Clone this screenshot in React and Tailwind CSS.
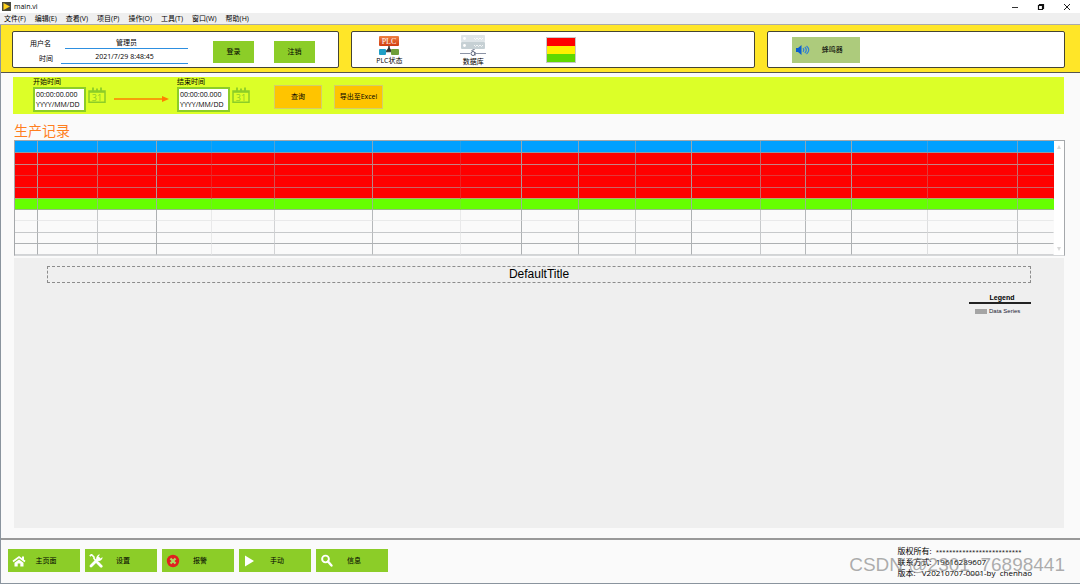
import { useState } from "react";

const menus = [
  "文件(F)",
  "编辑(E)",
  "查看(V)",
  "项目(P)",
  "操作(O)",
  "工具(T)",
  "窗口(W)",
  "帮助(H)",
];

// column widths, the last column takes what is left
const columns = [
  { width: 23, line: "border-r-[#a5a8abe6]" },
  { width: 60, line: "border-r-[#a5a8ab99]" },
  { width: 59, line: "border-r-[#a5a8abe6]" },
  { width: 55, line: "border-r-[#a5a8ab33]" },
  { width: 63, line: "border-r-[#a5a8ab77]" },
  { width: 98, line: "border-r-[#a5a8abcc]" },
  { width: 88, line: "border-r-[#a5a8ab33]" },
  { width: 61, line: "border-r-[#a5a8abe6]" },
  { width: 57, line: "border-r-[#a5a8abcc]" },
  { width: 57, line: "border-r-[#a5a8ab99]" },
  { width: 56, line: "border-r-[#a5a8abe6]" },
  { width: 69, line: "border-r-[#a5a8ab99]" },
  { width: 45, line: "border-r-[#a5a8abcc]" },
  { width: 46, line: "border-r-[#a5a8abe6]" },
  { width: 76, line: "border-r-[#a5a8ab55]" },
  { width: 90, line: "border-r-[#a5a8abaa]" },
  { width: null, line: "border-r-transparent" },
];

const rows = [
  { height: "h-[12px]", bg: "bg-[#ff0000]", line: "border-b-[#b9a5a5cc]" },
  { height: "h-[11px]", bg: "bg-[#ff0000]", line: "border-b-[#a5a8ab55]" },
  { height: "h-[12px]", bg: "bg-[#ff0000]", line: "border-b-[#a5a8ab99]" },
  { height: "h-[11px]", bg: "bg-[#ff0000]", line: "border-b-[#b5a878]" },
  { height: "h-[11px]", bg: "bg-[#66ff00]", line: "border-b-[#a5a8abcc]" },
  { height: "h-[11px]", bg: "bg-[#fafafa]", line: "border-b-[#a5a8ab33]" },
  { height: "h-[12px]", bg: "bg-[#fafafa]", line: "border-b-[#a5a8ab99]" },
  { height: "h-[11px]", bg: "bg-[#fafafa]", line: "border-b-[#a5a8abe6]" },
  { height: "h-[11px]", bg: "bg-[#fafafa]", line: "border-b-[#a5a8ab77]" },
];

function PlcIcon() {
  return (
    <svg className="h-5 w-5" viewBox="0 0 20 20">
      <defs>
        <linearGradient id="plcTop" x1="0" y1="0" x2="0" y2="1">
          <stop offset="0" stopColor="#f08040" />
          <stop offset="1" stopColor="#d03c10" />
        </linearGradient>
      </defs>
      <path d="M10 9v5M4 15.500h12" stroke="#444" strokeWidth="1.600" />
      <path d="M10 11l-3 4h6z" fill="#333" />
      <rect x="0" y="0" width="20" height="10" rx="1" fill="url(#plcTop)" />
      <text
        x="10"
        y="8"
        textAnchor="middle"
        fontFamily="Liberation Serif, serif"
        fontSize="8"
        fill="#fff"
      >
        PLC
      </text>
      <rect x="0" y="13" width="7" height="6" rx="1" fill="#1f9fc6" />
      <rect x="12" y="13" width="8" height="6" rx="1" fill="#6f9e38" />
    </svg>
  );
}

function DatabaseIcon() {
  return (
    <svg className="h-[22px] w-[26px]" viewBox="0 0 26 22" fill="none">
      <rect x="1" y="0" width="24" height="7" rx="1" fill="#dfe5e8" />
      <rect x="1" y="7" width="24" height="7" rx="1" fill="#c6d0d4" />
      <circle cx="4.500" cy="3.500" r="1.400" fill="#fff" />
      <circle cx="4.500" cy="10.500" r="1.400" fill="#fff" />
      <path
        d="M14 3l1.500 1.500L17 3l1.500 1.500L20 3l1.500 1.500L23 3M14 10l1.500 1.500L17 10l1.500 1.500L20 10l1.500 1.500L23 10"
        stroke="#fff"
        strokeWidth="0.800"
      />
      <path d="M0 18.500h10M16 18.500h10" stroke="#8b93a5" />
      <circle cx="13" cy="18.500" r="2" stroke="#59627a" />
      <path d="M11.500 15.500l3-1M15 17v3.500" stroke="#59627a" />
    </svg>
  );
}

function SpeakerIcon() {
  return (
    <svg className="h-[10px] w-[14px]" viewBox="0 0 14 10" fill="none">
      <path d="M0 3h2l3.500-3v10L2 7H0z" fill="#0a5fd0" />
      <path
        d="M7 3.200q1.600 1.800 0 3.600M8.800 2q3 3 0 6M10.500 1q4.500 4 0 8"
        stroke="#2f7fd4"
        strokeWidth="1.200"
      />
    </svg>
  );
}

function CalendarIcon() {
  return (
    <svg className="h-4 w-[18px]" viewBox="0 0 18 16" fill="none">
      <path d="M1 4h16v11.200H1z" stroke="#8ccd28" strokeWidth="1.500" />
      <path d="M1 4h16v1.800H1z" fill="#8ccd28" />
      <path d="M5 0.500v4M9 1.500v3M13 0.500v4" stroke="#8ccd28" strokeWidth="1.800" />
      <text
        x="9"
        y="13.500"
        textAnchor="middle"
        fontFamily="Open Sans, sans-serif"
        fontSize="9"
        fill="#8ccd28"
      >
        31
      </text>
    </svg>
  );
}

function HomeIcon() {
  return (
    <svg className="h-[14px] w-[14px]" viewBox="0 0 14 14" fill="none">
      <path d="M1 7.500L7 3l6 4.500" stroke="#fff" strokeWidth="1.800" />
      <path d="M10 2.500h2v4l-2-1.500z" fill="#fff" />
      <path d="M7 5.500l4.500 3.300V12.500H8.300V9.500H5.700v3H2.500V8.800z" fill="#fff" />
    </svg>
  );
}

function ToolsIcon() {
  return (
    <svg className="h-[14px] w-[14px]" viewBox="0 0 14 14" fill="none">
      <path d="M2 12L9.500 4.500" stroke="#fff" strokeWidth="2.800" strokeLinecap="round" />
      <path
        d="M13.500 3L11.600 4.600 9.400 2.600 11.200 0.600A3.600 3.600 0 0 0 7.400 5.200L9 6.800A3.600 3.600 0 0 0 13.500 3z"
        fill="#fff"
      />
      <path d="M0.800 2.200l1.700-1.600L5 3v1.500L8 8" stroke="#fff" strokeWidth="1.600" />
      <path d="M8.500 8.500l3.700 3.700" stroke="#fff" strokeWidth="2.800" strokeLinecap="round" />
    </svg>
  );
}

function AlarmIcon() {
  return (
    <svg className="h-[14px] w-[14px]" viewBox="0 0 14 14" fill="none">
      <circle cx="7" cy="7" r="6.200" fill="#e02020" />
      <path d="M4.500 4.500l5 5M9.500 4.500l-5 5" stroke="#a9dc62" strokeWidth="2.200" />
    </svg>
  );
}

function PlayIcon() {
  return (
    <svg className="h-[14px] w-[14px]" viewBox="0 0 14 14">
      <path d="M2 1.500L11 7l-9 5.500z" fill="#fff" />
    </svg>
  );
}

function SearchIcon() {
  return (
    <svg className="h-[14px] w-[14px]" viewBox="0 0 14 14" fill="none">
      <circle cx="5.500" cy="5" r="3.400" stroke="#fff" strokeWidth="1.900" />
      <path d="M8 7.500l3.500 4" stroke="#fff" strokeWidth="2.400" strokeLinecap="round" />
    </svg>
  );
}

const navItems = [
  { label: "主页面", Icon: HomeIcon },
  { label: "设置", Icon: ToolsIcon },
  { label: "报警", Icon: AlarmIcon },
  { label: "手动", Icon: PlayIcon },
  { label: "信息", Icon: SearchIcon },
];

function TitleBar() {
  return (
    <header className="flex h-[13px] items-center bg-white pr-[9px]">
      <svg className="ml-[2px] h-[9px] w-[9px]" viewBox="0 0 9 9">
        <rect width="9" height="9" fill="#4a4a3c" />
        <path d="M1.500 1L8 4.500 1.500 8z" fill="#ffd21c" />
      </svg>
      <h1 className="ml-[3px] flex-1">main.vi</h1>
      <div className="flex items-center gap-[18px]">
        <button aria-label="最小化">
          <svg className="h-2 w-2" viewBox="0 0 8 8" stroke="#333">
            <path d="M1 4.500h6" />
          </svg>
        </button>
        <button aria-label="还原">
          <svg className="h-2 w-2" viewBox="0 0 8 8" fill="none" stroke="#111">
            <path d="M1.500 2.500h4v4h-4zM2.500 2.500v-1h4v4h-1" strokeWidth="1.200" />
          </svg>
        </button>
        <button aria-label="关闭">
          <svg className="h-2 w-2" viewBox="0 0 8 8" stroke="#222">
            <path d="M1 1l6 6M7 1L1 7" />
          </svg>
        </button>
      </div>
    </header>
  );
}

function TimeField({ id, label }) {
  return (
    <div>
      <label htmlFor={id} className="block">
        {label}
      </label>
      <div className="flex gap-[2px]">
        <textarea
          id={id}
          rows={2}
          defaultValue={"00:00:00.000\nYYYY/MM/DD"}
          className="block h-[25px] w-[53px] resize-none overflow-hidden border-2 border-[#8ccd28] bg-white px-px pt-[1px] leading-[10px] outline-none"
        />
        <button aria-label={label} className="self-start">
          <CalendarIcon />
        </button>
      </div>
    </div>
  );
}

function RecordTable() {
  return (
    <div className="flex border border-[#a5a8ab] border-b-[#d5d7d9]">
      <table className="min-w-0 flex-1 table-fixed border-separate border-spacing-0">
        <colgroup>
          {columns.map((col, i) => (
            <col key={i} style={col.width ? { width: col.width } : undefined} />
          ))}
        </colgroup>
        <thead>
          <tr>
            {columns.map((col, i) => (
              <th
                key={i}
                className={`h-[12px] border-r border-b border-b-[#8f99a3] bg-[#00a0ff] p-0 ${col.line}`}
              />
            ))}
          </tr>
        </thead>
        <tbody>
          {rows.map((row, r) => (
            <tr key={r}>
              {columns.map((col, i) => (
                <td
                  key={i}
                  className={`border-r border-b p-0 ${row.height} ${row.bg} ${row.line} ${col.line}`}
                />
              ))}
            </tr>
          ))}
        </tbody>
      </table>
      <div className="flex w-[10px] flex-col items-center justify-between bg-white py-1">
        <svg className="h-1 w-1" viewBox="0 0 4 4" fill="#d8d8d8">
          <path d="M2 0l2 4H0z" />
        </svg>
        <svg className="h-1 w-1" viewBox="0 0 4 4" fill="#d8d8d8">
          <path d="M0 0h4L2 4z" />
        </svg>
      </div>
    </div>
  );
}

export default function App() {
  const [user, setUser] = useState("管理员");
  const [time, setTime] = useState("2021/7/29 8:48:45");

  return (
    <div className="relative flex min-h-screen flex-col bg-[#fafafa] font-['Open_Sans','Noto_Sans_CJK_SC',sans-serif] text-[7px] leading-[10px] text-black">
      <TitleBar />
      <nav className="flex h-3 items-center gap-[9px] border-b border-[#aaaaaa] bg-[#efefef] pl-1">
        {menus.map((menu) => (
          <button key={menu}>{menu}</button>
        ))}
      </nav>

      <div className="flex flex-1 flex-col border-b border-l border-[#8a949e]">
        {/* Status bar */}
        <section className="grid grid-cols-[327fr_403fr_298fr] gap-[12px] border-b border-[#55554d] bg-[#ffe628] pt-[6px] pr-[15px] pb-[4px] pl-[11px]">
          <div className="flex h-[37px] items-center rounded-[2px] border border-[#444433] bg-white pl-[17px]">
            <div className="flex w-[158px] flex-col gap-[2px]">
              <div className="flex items-end">
                <label htmlFor="user" className="w-[35px]">
                  用户名
                </label>
                <input
                  id="user"
                  value={user}
                  onChange={(e) => setUser(e.target.value)}
                  className="h-[13px] min-w-0 flex-1 border-b border-[#2d8fe0] text-center outline-none"
                />
              </div>
              <div className="flex items-end">
                <label htmlFor="time" className="w-[31px] pl-[9px]">
                  时间
                </label>
                <input
                  id="time"
                  value={time}
                  onChange={(e) => setTime(e.target.value)}
                  className="h-[13px] min-w-0 flex-1 border-b border-[#2d8fe0] text-center outline-none"
                />
              </div>
            </div>
            <button className="mt-1 ml-[25px] h-[22px] w-[41px] bg-[#8ccd28]">登录</button>
            <button className="mt-1 ml-[20px] h-[22px] w-[41px] bg-[#8ccd28]">注销</button>
          </div>

          <div className="flex items-center rounded-[2px] border border-[#444433] bg-white pl-[24px]">
            <div className="flex w-[26px] flex-col items-center pt-[3px]">
              <PlcIcon />
              <span className="whitespace-nowrap">PLC状态</span>
            </div>
            <div className="ml-[58px] flex w-[26px] flex-col items-center pt-[3px]">
              <DatabaseIcon />
              <span>数据库</span>
            </div>
            <div className="ml-[60px] flex h-[26px] w-[30px] flex-col border border-[#c8c8c8]">
              <span className="flex-1 bg-[#ff0000]" />
              <span className="flex-1 bg-[#fff000]" />
              <span className="flex-1 bg-[#5fd800]" />
            </div>
          </div>

          <div className="flex items-center rounded-[2px] border border-[#444433] bg-white pl-[24px]">
            <button className="flex h-[26px] w-[68px] items-center gap-[12px] bg-[#adcb7c] pl-1">
              <SpeakerIcon />
              蜂鸣器
            </button>
          </div>
        </section>

        <main className="flex flex-1 flex-col pt-1 pr-[15px] pb-[10px] pl-[13px]">
          {/* Query bar */}
          <section className="mr-px -ml-px flex h-[37px] items-start bg-[#dcff28] pl-[20px]">
            <TimeField id="start" label="开始时间" />
            <svg className="mx-2 mt-[19px] h-[6px] w-[55px]" viewBox="0 0 55 6">
              <path d="M0 3h49" stroke="#ff7f00" strokeWidth="1.500" />
              <path d="M48 0l7 3-7 3z" fill="#ff7f00" />
            </svg>
            <TimeField id="end" label="结束时间" />
            <button className="mt-2 ml-6 h-6 w-12 border border-[#d3cf6a] bg-[#ffc400]">
              查询
            </button>
            <button className="mt-2 ml-3 h-6 w-[49px] border border-[#d3cf6a] bg-[#ffc400] whitespace-nowrap">
              导出至Excel
            </button>
          </section>

          <h2 className="mt-[8px] text-[14px] leading-[18px] text-[#ff7f1f]">
            生产记录
          </h2>
          <RecordTable />

          {/* Chart */}
          <section className="mt-[2px] mr-px flex flex-1 flex-col bg-[#efefef] px-[33px] pt-2 font-['Liberation_Sans',sans-serif]">
            <h3 className="border border-dashed border-[#8c8c8c] text-center text-[12px] leading-[15px]">
              DefaultTitle
            </h3>
            <div className="mt-[11px] w-[62px] self-end">
              <h4 className="border-b-2 border-[#222222] pl-1 text-center leading-[8px] font-bold">
                Legend
              </h4>
              <div className="mt-[2px] flex items-center gap-[2px] pl-[6px] text-[6px] text-[#223]">
                <span className="h-[5px] w-[12px] bg-[#a5a5a5]" />
                Data Series
              </div>
            </div>
          </section>
        </main>

        <footer className="flex items-start justify-between border-t-2 border-[#999999] pr-[48px] pl-[7px]">
          <nav className="flex gap-[5px] pt-[9px]">
            {navItems.map(({ label, Icon }) => (
              <button
                key={label}
                className="flex h-[23px] w-[72px] items-center bg-[#8ccd28] pl-1"
              >
                <Icon />
                <span className="flex-1 pr-[14px] text-center">{label}</span>
              </button>
            ))}
          </nav>
          <div className="pt-[5px] pb-[5px] text-[8px] leading-[11px] whitespace-pre">
            <p>
              版权所有:{"  "}
              <span className="text-[6px] leading-none">
                **************************
              </span>
            </p>
            <p>联系方式:{"  "}19616289607</p>
            <p>版本:{"   "}V20210707-0001-by{"  "}chenhao</p>
          </div>
        </footer>
      </div>

      <span className="absolute right-[15px] bottom-[8px] font-['Liberation_Sans',sans-serif] text-[19px] leading-[22px] text-[#77777799]">
        CSDN @2301_76898441
      </span>
    </div>
  );
}
